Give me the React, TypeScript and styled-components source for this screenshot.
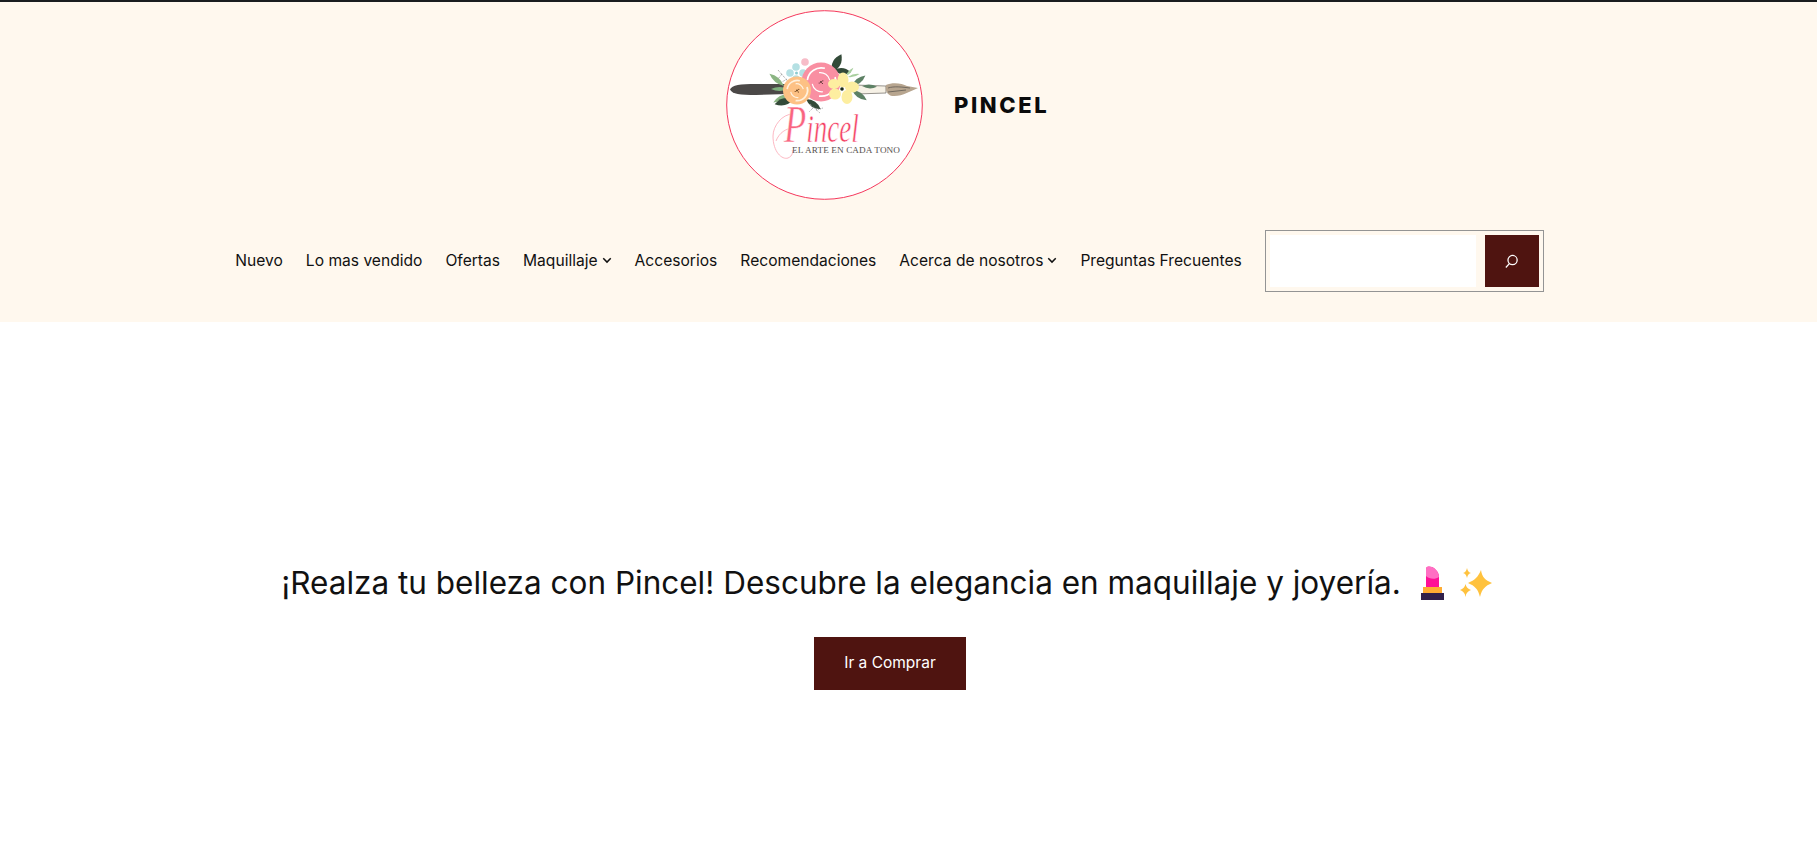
import React from "react";
import styled, { createGlobalStyle } from "styled-components";

const Global = createGlobalStyle`
  html, body { margin: 0; padding: 0; background: #fff; }
  body { font-family: Inter, "Liberation Sans", Arial, sans-serif; color: #111; }
`;
const Page = styled.div`
  height: 848px; overflow: hidden; border-top: 2px solid #1a1d1f; box-sizing: border-box;
`;
const Header = styled.header`
  background: #fff8ee; height: 320px; padding-right: 38px; box-sizing: border-box;
  display: flex; flex-direction: column; align-items: center;
`;
const Brand = styled.div`
  display: flex; align-items: center; gap: 31px; padding: 8px 3px 0 0; height: 198px; box-sizing: border-box;
`;
const LogoSvg = styled.svg`
  width: 197px; height: 190px; flex: none; display: block;
`;
const Title = styled.div`
  font-size: 22px; font-weight: 800; letter-spacing: 2.6px; color: #0b0b0b; width: 96px; white-space: nowrap;
`;
const Bar = styled.div`
  display: flex; align-items: center; gap: 23px; margin-top: 30px;
`;
const Nav = styled.nav`
  display: flex; align-items: center; gap: 23px;
`;
const NavItem = styled.a`
  display: inline-flex; align-items: center; gap: 4px; font-size: 15.6px; color: #111; white-space: nowrap; padding-bottom: 2px;
`;
const Search = styled.form`
  display: flex; justify-content: space-between; width: 279px; height: 62px; box-sizing: border-box;
  border: 1px solid #949494; padding: 4px; margin: 0;
`;
const SearchInput = styled.input`
  width: 206px; height: 52px; border: 0; padding: 0; background: #fff; outline: none; display: block;
`;
const SearchButton = styled.button`
  width: 54px; height: 52px; border: 0; padding: 0; background: #4f1410; color: #fff;
  display: flex; align-items: center; justify-content: center;
`;
const Hero = styled.main`
  padding: 241px 37px 0 0; display: flex; flex-direction: column; align-items: center;
`;
const Headline = styled.h1`
  margin: 0; padding-right: 7px; display: flex; align-items: center; font-size: 31.5px; font-weight: 400; line-height: 40px; color: #111; white-space: nowrap;
`;
const Emoji = styled.svg`
  display: block; margin-left: ${(p: { $gap: number }) => p.$gap}px; flex: none;
`;
const Cta = styled.a`
  margin-top: 34px; width: 152px; height: 53px; padding-bottom: 2px; box-sizing: border-box; background: #4f1410; color: #fff;
  display: flex; align-items: center; justify-content: center; font-size: 15.5px;
`;
const PincelText = styled.text`
  font-family: "Liberation Serif", serif; font-style: italic; font-size: 20px; fill: #f43f63; stroke: #fff; stroke-width: 0.3px;
`;
const BigLetter = styled.tspan`
  font-size: 27px; fill: #f9657f;
`;
const MottoText = styled.text`
  font-family: "Liberation Serif", serif; font-size: 9.2px; fill: #55514f;
`;

const Chevron = () => (
  <svg width="10" height="10" viewBox="0 0 24 24" fill="none" stroke="#111" strokeWidth="3.6" aria-hidden="true">
    <path d="M3 8l9 9 9-9" />
  </svg>
);

const Rose = ({ x, y, r, fill, line, dot }: { x: number; y: number; r: number; fill: string; line: string; dot: string }) => (
  <g transform={`translate(${x} ${y})`}>
    <circle r={r} fill={fill} />
    <path d={`M${-r * 0.7} ${-r * 0.1}A${r * 0.72} ${r * 0.72} 0 0 1 ${r * 0.2} ${-r * 0.7}`} stroke={line} strokeWidth="1.6" fill="none" />
    <path d={`M${r * 0.72} ${-r * 0.25}A${r * 0.75} ${r * 0.75} 0 0 1 ${-r * 0.1} ${r * 0.72}`} stroke={line} strokeWidth="1.8" fill="none" />
    <path d={`M${-r * 0.45} ${r * 0.1}A${r * 0.5} ${r * 0.5} 0 0 0 ${r * 0.1} ${r * 0.5}`} stroke={line} strokeWidth="1.2" fill="none" />
    <path d={`M${r * 0.45} ${-r * 0.1}A${r * 0.5} ${r * 0.5} 0 0 0 ${-r * 0.1} ${-r * 0.48}`} stroke={line} strokeWidth="1.2" fill="none" />
    <circle r={0.9} fill={dot} />
    <circle cx={1.8} cy={-1.2} r={0.6} fill={dot} />
    <circle cx={-1.8} cy={1} r={0.6} fill={dot} />
    <circle cx={1.4} cy={1.5} r={0.6} fill={dot} />
  </g>
);

const Leaf = ({ x, y, len, w, rot, fill }: { x: number; y: number; len: number; w: number; rot: number; fill: string }) => (
  <path transform={`translate(${x} ${y}) rotate(${rot})`} d={`M0 0Q${len / 2} ${-w} ${len} 0Q${len / 2} ${w} 0 0Z`} fill={fill} />
);

const Logo = () => (
  <LogoSvg viewBox="0 0 197 190" aria-label="Pincel logo">
    <ellipse cx="98.5" cy="95" rx="97.8" ry="94.3" fill="#fff" stroke="#f5385d" strokeWidth="1" />
    <path d="M4 79.5C6 75 14 74 30 74L62 74 62 84 30 85C14 85 6 84 4 79.5Z" fill="#4b4847" />
    <path d="M128 75L160 76 160 83 130 84Z" fill="#f6f1e6" stroke="#6a6660" strokeWidth="0.7" />
    <path d="M160 75C166 72 176 73 181 76L192 78C184 81 176 87 166 86 161 85 159 80 160 75Z" fill="#b7a58f" />
    <path d="M162 78C168 76 176 77 184 78M162 82C168 81 174 81 180 80" stroke="#55504a" strokeWidth="0.7" fill="none" />
    <Leaf x={58} y={76} len={19} w={5} rot={-140} fill="#8bb583" />
    <Leaf x={62} y={79} len={17} w={4} rot={180} fill="#7fb07e" />
    <Leaf x={62} y={84} len={17} w={4.5} rot={150} fill="#8bb583" />
    <Leaf x={68} y={89} len={20} w={7} rot={165} fill="#334a38" />
    <Leaf x={80} y={89} len={18} w={6} rot={35} fill="#334a38" />
    <Leaf x={106} y={62} len={20} w={8} rot={-62} fill="#334a38" />
    <Leaf x={108} y={60} len={17} w={6} rot={8} fill="#334a38" />
    <Leaf x={126} y={76} len={17} w={5} rot={-38} fill="#5d8165" />
    <Leaf x={126} y={80} len={18} w={5.5} rot={35} fill="#5d8165" />
    <Leaf x={136} y={76} len={15} w={4} rot={3} fill="#5d8165" />
    <Leaf x={120} y={66} len={11} w={2.5} rot={-48} fill="#a9cf9f" />
    <Leaf x={122} y={67} len={12} w={2.5} rot={-15} fill="#a9cf9f" />
    <path d="M52 60L66 76M56 64L52 69M61 69L56 72" stroke="#9a9a9a" strokeWidth="1" strokeDasharray="1 1" fill="none" />
    <path d="M84 94L94 103M87 98L83 102M90 100L97 98" stroke="#9a9a9a" strokeWidth="1" strokeDasharray="1 1" fill="none" />
    <path d="M130 73L120 79" stroke="#8a8a8a" strokeWidth="1.4" />
    <g fill="#b4e0e3">
      <circle cx="70" cy="57" r="3.8" /><circle cx="77" cy="63" r="3.8" /><circle cx="70" cy="69" r="3.8" /><circle cx="64" cy="63" r="3.8" />
    </g>
    <circle cx="70.5" cy="63" r="1.5" fill="#8ccbd0" />
    <circle cx="79" cy="52" r="3.8" fill="#f7bcc8" />
    <Rose x={95} y={72} r={19.5} fill="#f98fa2" line="#fff" dot="#4d2a2a" />
    <Rose x={71} y={80.5} r={14} fill="#fdc184" line="#fff1dd" dot="#5a3413" />
    <g fill="#fdeea0">
      <ellipse cx="117" cy="70" rx="5.5" ry="7.5" /><ellipse cx="126" cy="77" rx="7" ry="5.5" /><ellipse cx="121" cy="87" rx="5.5" ry="7" />
      <ellipse cx="109" cy="84" rx="6" ry="5.5" /><ellipse cx="108" cy="74" rx="6" ry="5" />
    </g>
    <circle cx="116" cy="79" r="1.8" fill="#1c2b1d" />
    <path d="M67 104C56 104 47 116 47 126 47 142 56 150 62 148 67 146 67 141 66 140M50 131C53 123 60 118 68 118" fill="none" stroke="#fba6b4" strokeWidth="0.8" />
    <PincelText transform="translate(58 132) scale(1.35 1.95)"><BigLetter>P</BigLetter>incel</PincelText>
    <MottoText x="66" y="143" textLength="108">EL ARTE EN CADA TONO</MottoText>
  </LogoSvg>
);

const Lipstick = () => (
  <Emoji $gap={20} width="23" height="34" viewBox="0 0 23 34" aria-hidden="true">
    <path d="M5 22V3C5 0 8 0 11 1 15 3 18 7 18 11V22Z" fill="#ff0f96" />
    <path d="M5 10V3C5 0 8 0 11 1 15 3 18 7 18 11 14 14 8 13 5 10Z" fill="#ff6fc3" />
    <rect x="2" y="21" width="19" height="6" fill="#ffac33" />
    <rect x="0" y="27" width="23" height="7" fill="#31204a" />
  </Emoji>
);
const Sparkles = () => (
  <Emoji $gap={16} width="32" height="30" viewBox="0 0 32 30" aria-hidden="true">
    <g fill="#ffc23e">
      <path d="M21 2C22 9 25 12 32 15 25 18 22 21 20 29 18 21 15 18 8 15 15 12 18 9 21 2Z" />
      <path d="M7 0C7.6 3 9 4.4 11 5 9 5.6 7.6 7 7 10 6.4 7 5 5.6 3 5 5 4.4 6.4 3 7 0Z" />
      <path d="M5.5 16C6 19 8 21 11 22 8 23 6 25 5.5 29 5 25 3 23 0 22 3 21 5 19 5.5 16Z" />
    </g>
  </Emoji>
);

const items: { label: string; caret?: boolean }[] = [
  { label: "Nuevo" }, { label: "Lo mas vendido" }, { label: "Ofertas" }, { label: "Maquillaje", caret: true },
  { label: "Accesorios" }, { label: "Recomendaciones" }, { label: "Acerca de nosotros", caret: true }, { label: "Preguntas Frecuentes" },
];

export default function App() {
  return (
    <Page>
      <Global />
      <Header>
        <Brand>
          <Logo />
          <Title>PINCEL</Title>
        </Brand>
        <Bar>
          <Nav>
            {items.map((it) => (
              <NavItem key={it.label}>{it.label}{it.caret && <Chevron />}</NavItem>
            ))}
          </Nav>
          <Search>
            <SearchInput aria-label="Buscar" />
            <SearchButton type="button" aria-label="Buscar">
              <svg width="17" height="17" viewBox="0 0 24 24" fill="none" stroke="#fff" strokeWidth="1.8"><circle cx="13.5" cy="10" r="6.5" /><path d="M9 15l-5 5.5" /></svg>
            </SearchButton>
          </Search>
        </Bar>
      </Header>
      <Hero>
        <Headline>¡Realza tu belleza con Pincel! Descubre la elegancia en maquillaje y joyería.<Lipstick /><Sparkles /></Headline>
        <Cta>Ir a Comprar</Cta>
      </Hero>
    </Page>
  );
}
